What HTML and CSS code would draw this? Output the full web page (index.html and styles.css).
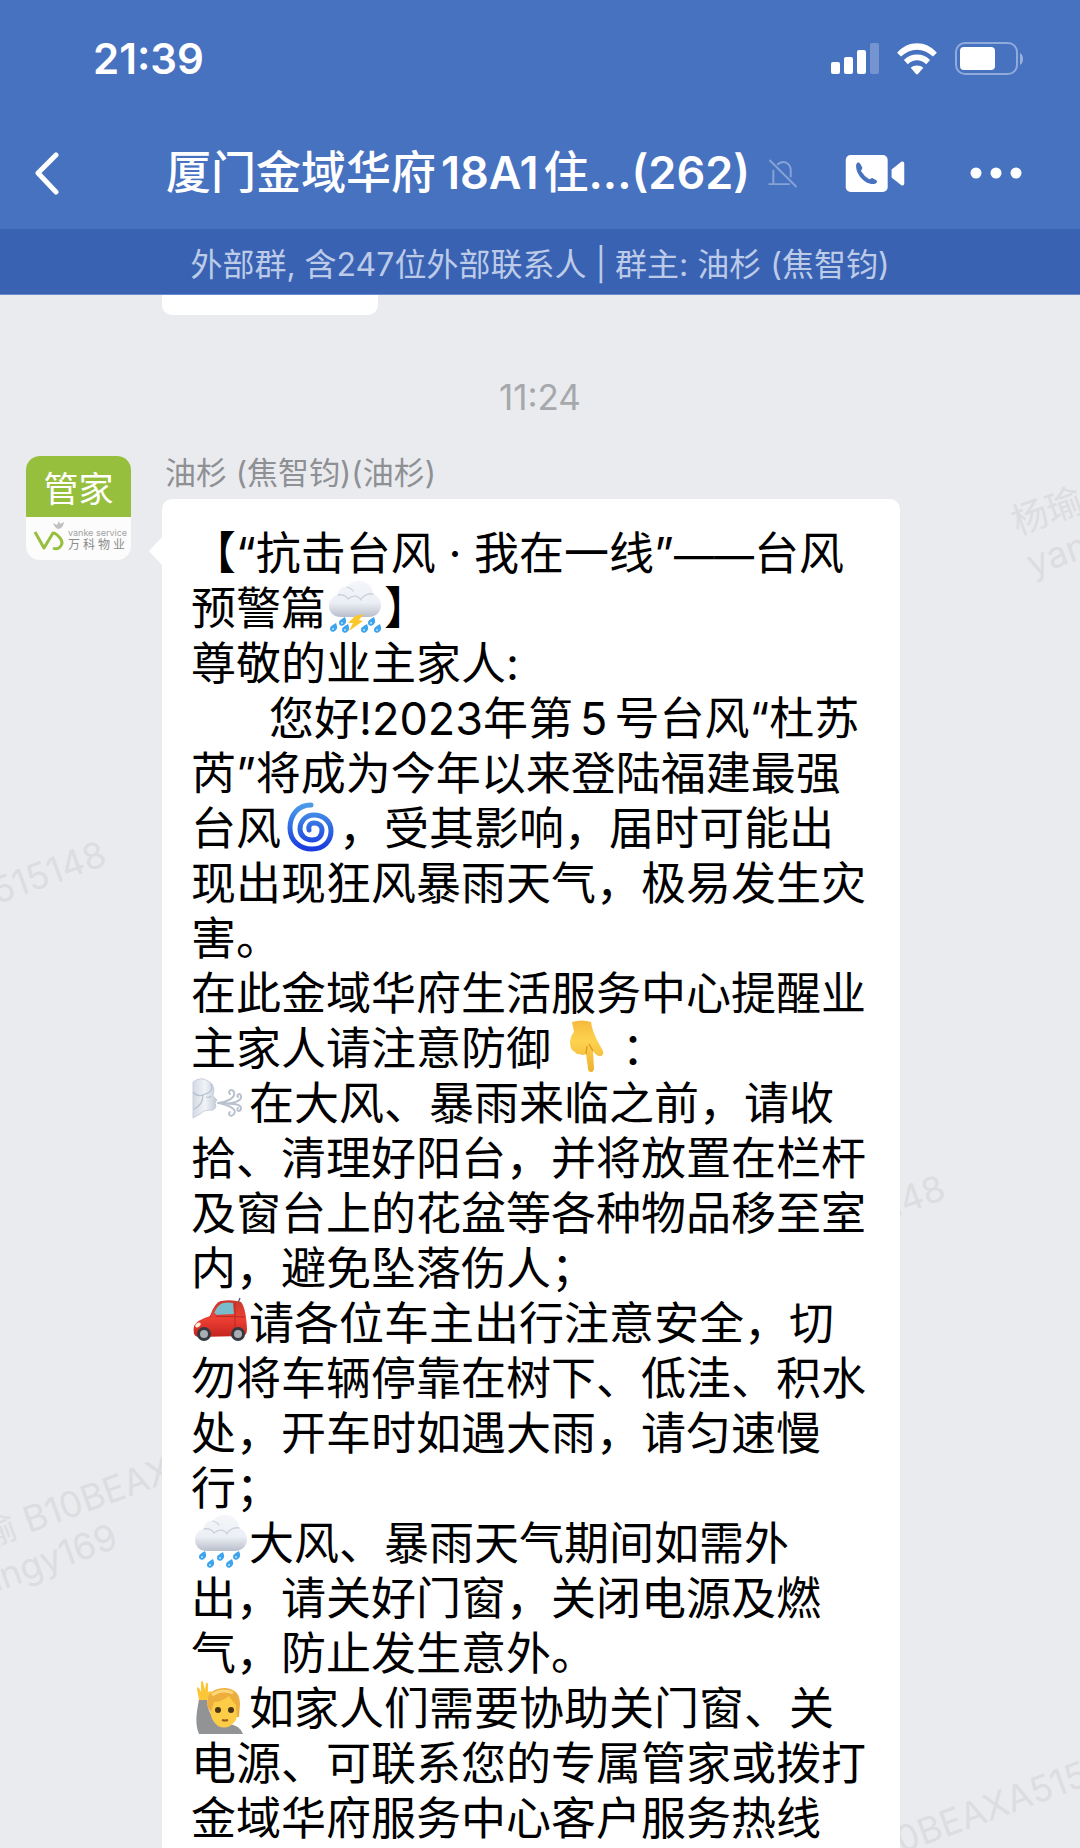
FILE: index.html
```html
<!DOCTYPE html>
<html lang="zh-CN">
<head>
  <meta charset="UTF-8">
  <meta name="viewport" content="width=device-width, initial-scale=1.0">
  <title>厦门金域华府18A1住户群</title>
  <link rel="stylesheet" href="styles.css">
</head>
<body>
  <svg class="defs" aria-hidden="true">
    <defs>
      <linearGradient id="cloudFill" x1="0" y1="0" x2="0" y2="1">
        <stop offset="0" stop-color="#f4f6f9"/>
        <stop offset="0.6" stop-color="#eceff5"/>
        <stop offset="1" stop-color="#b9bfcb"/>
      </linearGradient>
      <linearGradient id="cycloneFill" x1="0" y1="0" x2="0" y2="1">
        <stop offset="0" stop-color="#4a9be8"/>
        <stop offset="1" stop-color="#1a3be0"/>
      </linearGradient>
      <linearGradient id="handFill" x1="0" y1="0" x2="0" y2="1">
        <stop offset="0" stop-color="#f6b93c"/>
        <stop offset="0.4" stop-color="#fdd24f"/>
        <stop offset="1" stop-color="#efb02f"/>
      </linearGradient>
      <linearGradient id="carFill" x1="0" y1="0" x2="0" y2="1">
        <stop offset="0" stop-color="#c9382c"/>
        <stop offset="0.5" stop-color="#ee4034"/>
        <stop offset="1" stop-color="#c3241f"/>
      </linearGradient>
      <linearGradient id="faceFill" x1="0" y1="0" x2="1" y2="0">
        <stop offset="0" stop-color="#d4dae4"/>
        <stop offset="0.5" stop-color="#f0f3f7"/>
        <stop offset="1" stop-color="#c3cad7"/>
      </linearGradient>
      <g id="drop">
        <path d="M3 0C4 3 5 5 3 7C1 10-3 9-3 6C-3 3 0 2 3 0Z" fill="#3fa4ee"/>
        <circle cx="0" cy="6" r="1" fill="#b9e2fb"/>
      </g>
      <g id="cloud">
        <path d="M13 36C5 36 1 31 1 25C1 19 5 15 10 14C10 8 15 5 19 6C22 1 27 0 31 0C39 0 45 6 45 13C50 15 53 19 53 24C53 31 48 36 41 36Z" fill="url(#cloudFill)"/>
        <path d="M10 14C15 13 18 15 20 18C24 14 30 14 33 19M19 6C22 7 24 8 25 10M33 18C36 14 41 12 45 13" fill="none" stroke="#ccd1db" stroke-width="1.3" stroke-linecap="round"/>
      </g>
    </defs>
  </svg>

  <header class="top">
    <div class="status">
      <time>21:39</time>
      <div class="status-icons">
        <svg width="48" height="31" viewBox="0 0 48 31" fill="#fff">
          <rect x="0" y="19" width="9" height="12" rx="2"/>
          <rect x="13" y="14" width="9" height="17" rx="2"/>
          <rect x="26" y="7" width="9" height="24" rx="2"/>
          <rect x="39" y="0" width="9" height="31" rx="2" opacity="0.25"/>
        </svg>
        <svg width="42" height="32" viewBox="0 0 42 33" fill="#fff">
          <path d="M0.5 10C12-3 30-3 41.500 10L37.500 14C28 4.500 14 4.500 4.500 14Z"/>
          <path d="M7.500 17.500C15 10 27 10 34.500 17.500L30.500 22C25 16.500 17 16.500 11.500 22Z"/>
          <path d="M14.500 25.500C18 22.500 24 22.500 27.500 25.500L22 32Q21 33 20 32Z"/>
        </svg>
        <svg width="69" height="33" viewBox="0 0 69 33">
          <rect x="1" y="1" width="61" height="31" rx="9" fill="none" stroke="#fff" stroke-opacity="0.4" stroke-width="2"/>
          <rect x="5" y="5" width="35" height="23" rx="4" fill="#fff"/>
          <path d="M65 11Q68 13 68 17Q68 21 65 23Z" fill="#fff" fill-opacity="0.45"/>
        </svg>
      </div>
    </div>
    <div class="nav">
      <button class="icon-btn" type="button" aria-label="返回">
        <svg width="24" height="43" viewBox="0 0 24 43" fill="none" stroke="#fff" stroke-width="5" stroke-linecap="round" stroke-linejoin="round"><path d="M21 3L3 21L21 40"/></svg>
      </button>
      <div class="nav-title">
        <h1>厦门金域华府<span class="room">18A1</span>住<span class="count">...(262)</span></h1>
        <svg width="30" height="29" viewBox="0 0 30 30" fill="none" stroke="#87a3d6" stroke-width="2"><path d="M1 1L29 29M0 26H22M5 26V11M9 6C15 0 23 4 23 12V19"/></svg>
      </div>
      <button class="icon-btn" type="button" aria-label="视频通话">
        <svg width="60" height="39" viewBox="0 0 60 40" fill="#fff">
          <rect x="0" y="1" width="43" height="38" rx="5"/>
          <path d="M47 16L57 8Q60 7 60 10V30Q60 33 57 32L47 24Z"/>
          <path d="M11 10C13 7 15 9 17 14C17 16 15 17 16 18Q19 23 24 26C26 26 26 24 28 25Q33 27 32 29C30 32 25 31 21 29Q13 24 11 16Q10 12 11 10Z" fill="#4772c0"/>
        </svg>
      </button>
      <button class="icon-btn" type="button" aria-label="更多">
        <svg width="52" height="12" viewBox="0 0 52 12" fill="#fff"><circle cx="6" cy="6" r="5.500"/><circle cx="26" cy="6" r="5.500"/><circle cx="46" cy="6" r="5.500"/></svg>
      </button>
    </div>
    <p class="group-info">外部群, 含247位外部联系人 | 群主: 油杉 (焦智钧)</p>
  </header>

  <main class="chat">
    <div class="watermark wm-1">杨瑜 B10BEAXA515148<br>yangy169</div>
    <div class="watermark wm-2">杨瑜 B10BEAXA515148</div>
    <div class="watermark wm-3">杨瑜 B10BEAXA515148<br>yangy169</div>
    <div class="watermark wm-4">杨瑜 B10BEAXA515148<br>yangy169</div>
    <div class="watermark wm-5">杨瑜 B10BEAXA515148<br>yangy169</div>

    <div class="prev-bubble"></div>
    <time class="chat-time">11:24</time>

    <article class="message">
      <div class="avatar">
        <span class="avatar-role">管家</span>
        <svg class="avatar-logo" width="105" height="43" viewBox="0 0 105 43">
          <path d="M9 15L18 31L27 16Q30 16 34 21Q38 26 34 30Q31 33 27 31" fill="none" stroke="#97bf3e" stroke-width="3" stroke-linejoin="round"/>
          <path d="M27 6L31 8L33 4L34 7L38 5Q37 12 32 12Q29 11 27 6Z" fill="#bfc1bf"/>
          <text x="42" y="19" class="logo-en">vanke service</text>
          <text x="42 57 72 87" y="32" class="logo-cn">万科物业</text>
        </svg>
      </div>
      <div class="message-body">
        <h2 class="sender">油杉 (焦智钧)(油杉)</h2>
        <div class="bubble">
          <p>【“抗击台风 · 我在一线”<span class="dash">——</span>台风<br>
          预警篇<svg class="emoji" viewBox="0 0 54 54" role="img" aria-label="雷雨"><use href="#cloud" y="1"/><use href="#drop" x="5" y="43"/><use href="#drop" x="14" y="37"/><use href="#drop" x="17" y="44"/><use href="#drop" x="36" y="44"/><use href="#drop" x="43" y="37"/><use href="#drop" x="49" y="44"/><path d="M27 36L36 34L31 40L35 41L21 51L25 43L20 43Z" fill="#fbc72e"/></svg>】</p>
          <p>尊敬的业主家人:</p>
          <p class="indent">您好!2023年第<span class="num">5</span>号台风“杜苏<br>
          芮”将成为今年以来登陆福建最强<br>
          台风<svg class="emoji" viewBox="0 0 54 54" role="img" aria-label="台风"><path d="M28 5C15 5 7 15 7 28C7 41 17 49 29 49C41 49 48 41 48 31C48 21 40 15 31 15C22 15 17 22 17 29C17 36 23 40 29 40C36 40 39 35 39 30C39 25 35 23 31 23C27 23 25 26 26 30" fill="none" stroke="url(#cycloneFill)" stroke-width="5" stroke-linecap="round"/></svg>，受其影响，届时可能出<br>
          现出现狂风暴雨天气，极易发生灾<br>
          害。</p>
          <p>在此金域华府生活服务中心提醒业<br>
          主家人请注意防御 <svg class="emoji" viewBox="0 0 54 54" role="img" aria-label="向下"><path d="M6 2Q16-1 25 2Q26 10 31 20L37 31Q38 35 35 36Q31 37 27 31L28 48Q28 52 25 52Q22 52 22 48L20 34Q16 36 14 34Q11 35 9 32Q4 30 4 22Q5 15 8 12Z" fill="url(#handFill)"/><path d="M20 34L21 26M27 31L23 24" stroke="#d99824" fill="none" stroke-width="1.300"/></svg>：</p>
          <p><svg class="emoji" viewBox="0 0 54 54" role="img" aria-label="大风"><path d="M0 7Q8 1 15 6Q20 8 21 14L20 21L24 25L22 28L23 31Q22 36 17 35Q10 35 7 39L0 43Z" fill="url(#faceFill)" stroke="#bfc7d4" stroke-width="0.800"/><path d="M0 17Q5 23 12 19Q21 17 18 9M13 22Q17 23 18 21M1 34Q10 30 10 20" fill="none" stroke="#b7c0ce" stroke-width="1.200"/><path d="M25 28C34 27 43 23 41 17C39 13 34 16 37 19M25 28C38 30 50 26 48 21C47 17 43 20 45 22M26 28C33 30 45 33 41 39C38 43 34 39 37 37M30 29C39 28 49 29 48 34C46 38 43 35 45 33" fill="none" stroke="#bac1ce" stroke-width="2" stroke-linecap="round"/></svg>在大风、暴雨来临之前，请收<br>
          拾、清理好阳台，并将放置在栏杆<br>
          及窗台上的花盆等各种物品移至室<br>
          内，避免坠落伤人；</p>
          <p><svg class="emoji" viewBox="0 0 54 54" role="img" aria-label="汽车"><path d="M45 8L47 3" stroke="#555" stroke-width="1.300"/><path d="M1 31Q4 25 17 21Q22 7 28 6Q39 4 48 7Q53 13 54 34Q54 40 50 41L5 42Q-1 41 1 31Z" fill="url(#carFill)"/><path d="M20 20Q25 9 30 8Q35 7 40 8L41 19Z" fill="#79bccb"/><path d="M17 21L52 22M42 8L42 38" stroke="#b82821" stroke-width="1"/><ellipse cx="5" cy="30" rx="3" ry="2" transform="rotate(-40 5 30)" fill="#fff0db"/><rect x="18" y="18" width="5" height="5" rx="2" fill="#e74236"/><circle cx="11" cy="39" r="7" fill="#343940"/><circle cx="11" cy="39" r="4" fill="#a9adb4"/><circle cx="45" cy="39" r="7" fill="#343940"/><circle cx="45" cy="39" r="4" fill="#a9adb4"/></svg>请各位车主出行注意安全，切<br>
          勿将车辆停靠在树下、低洼、积水<br>
          处，开车时如遇大雨，请匀速慢<br>
          行；</p>
          <p><svg class="emoji" viewBox="0 0 54 54" role="img" aria-label="下雨"><use href="#cloud" x="1"/><use href="#drop" x="9" y="36"/><use href="#drop" x="17" y="44"/><use href="#drop" x="27" y="37"/><use href="#drop" x="36" y="44"/><use href="#drop" x="43" y="36"/></svg>大风、暴雨天气期间如需外<br>
          出，请关好门窗，关闭电源及燃<br>
          气，防止发生意外。</p>
          <p><svg class="emoji" viewBox="0 0 54 54" role="img" aria-label="举手"><path d="M6 19L14 19Q14 31 21 38Q25 44 35 44Q47 45 50 54H6Q2 45 4 31Z" fill="#929395"/><path d="M6 20L4 9Q4 6 6 8L8 12L8 2Q9 0 10 2L12 10L13 3Q15 2 15 5L15 12L18 11Q20 12 17 15L14 20Z" fill="#fbc638"/><path d="M17 28Q17 11 31 11Q46 12 45 30Q45 41 37 46Q31 49 25 46Q17 40 17 28Z" fill="#fdcd48"/><path d="M14 22Q16 8 32 8Q47 9 47 24L46 37L44 37L43 25Q38 20 36 16Q28 22 21 22L18 32Q14 28 14 22Z" fill="#edae3e"/><path d="M19 15Q29 8 40 13" stroke="#ffd778" stroke-width="3" fill="none"/><circle cx="25" cy="30" r="3" fill="#4d3519"/><circle cx="38" cy="30" r="3" fill="#4d3519"/><path d="M29 40Q32 41 35 40" stroke="#975b17" stroke-width="2" fill="none"/></svg>如家人们需要协助关门窗、关<br>
          电源、可联系您的专属管家或拨打<br>
          金域华府服务中心客户服务热线</p>
        </div>
      </div>
    </article>
  </main>
</body>
</html>
```
FILE: styles.css
```css
* {
  box-sizing: border-box;
}
body {
  margin: 0;
  height: 100vh;
  display: flex;
  flex-direction: column;
  font-family: Inter, "Noto Sans CJK SC", sans-serif;
  background: #eaebef;
}
h1, h2, p {
  margin: 0;
}
svg {
  display: block;
  flex-shrink: 0;
}
.defs {
  position: absolute;
  width: 0;
  height: 0;
}

/* header */
.top {
  background: #4772c0;
  color: #fff;
}
.status {
  display: flex;
  align-items: center;
  justify-content: space-between;
  height: 117px;
  padding: 0 56px 0 93px;
  font-size: 42px;
  font-weight: 600;
}
.status-icons {
  display: flex;
  align-items: center;
  gap: 17px;
}
.nav {
  display: flex;
  align-items: center;
  height: 112px;
  padding: 0 58px 0 35px;
}
.nav-title {
  flex: 1;
  display: flex;
  align-items: center;
  justify-content: flex-end;
  gap: 18px;
  padding-right: 47px;
}
.nav h1 {
  font-size: 45px;
  line-height: 60px;
  font-weight: 500;
  white-space: nowrap;
}
.room, .count {
  font-weight: 600;
}
.room {
  margin: 0 5px;
}
.icon-btn {
  padding: 0;
  border: 0;
  background: none;
  cursor: pointer;
}
.icon-btn + .icon-btn {
  margin-left: 65px;
}
.group-info {
  height: 66px;
  border-bottom: 1px solid #6a8bcb;
  background: #3a62b2;
  color: #bccbe8;
  font-size: 32px;
  line-height: 72px;
  text-align: center;
}

/* conversation */
.chat {
  position: relative;
  flex: 1;
  min-height: 0;
  overflow: hidden;
}
.prev-bubble {
  width: 20%;
  height: 20px;
  margin-left: 162px;
  border-radius: 0 0 10px 10px;
  background: #fff;
}
.chat-time {
  display: block;
  margin-top: 62px;
  color: #a6a8ac;
  font-size: 35px;
  line-height: 40px;
  text-align: center;
}
.message {
  position: relative;
  display: flex;
  gap: 31px;
  margin-top: 34px;
  padding: 0 180px 0 26px;
}
.avatar {
  flex-shrink: 0;
  width: 105px;
  height: 104px;
  margin-top: 5px;
  border-radius: 14px;
  overflow: hidden;
  background: #fcfcfc;
}
.avatar-role {
  display: block;
  padding-top: 6px;
  background: #97bf3e;
  color: #fff;
  font-size: 35px;
  line-height: 55px;
  text-align: center;
}
.logo-en {
  font-size: 9px;
  fill: #a0a2a0;
}
.logo-cn {
  font-size: 12px;
  fill: #8b8d8b;
}
.message-body {
  flex: 1;
}
.sender {
  padding: 0 3px 4px;
  color: #8e9094;
  font-size: 31px;
  font-weight: 400;
  line-height: 44px;
}
.bubble {
  position: relative;
  padding: 27px 24px 30px 29px;
  border-radius: 10px;
  background: #fff;
  color: #000;
  font-size: 45px;
  line-height: 55px;
  white-space: nowrap;
}
.bubble::before {
  content: "";
  position: absolute;
  left: -13px;
  top: 38px;
  border: solid transparent;
  border-width: 14px 13px 14px 0;
  border-right-color: #fff;
}
.indent {
  text-indent: 78px;
}
.num {
  margin: 0 7px;
}
.dash {
  font-size: 40px;
  line-height: 1;
}
.emoji {
  display: inline-block;
  width: 54px;
  height: 54px;
  margin: -6px 2px;
  vertical-align: -3px;
  overflow: visible;
}

/* staff watermark behind the messages */
.watermark {
  position: absolute;
  color: #dcdde0;
  font-size: 36px;
  line-height: 44px;
  white-space: nowrap;
  transform: rotate(-20deg);
  transform-origin: 18px 22px;
}
.wm-1 {
  left: 1012px;
  top: 200px;
}
.wm-2 {
  left: -255px;
  top: 659px;
}
.wm-3 {
  left: -54px;
  top: 1226px;
}
.wm-4 {
  left: 584px;
  top: 993px;
}
.wm-5 {
  left: 783px;
  top: 1559px;
}
```
